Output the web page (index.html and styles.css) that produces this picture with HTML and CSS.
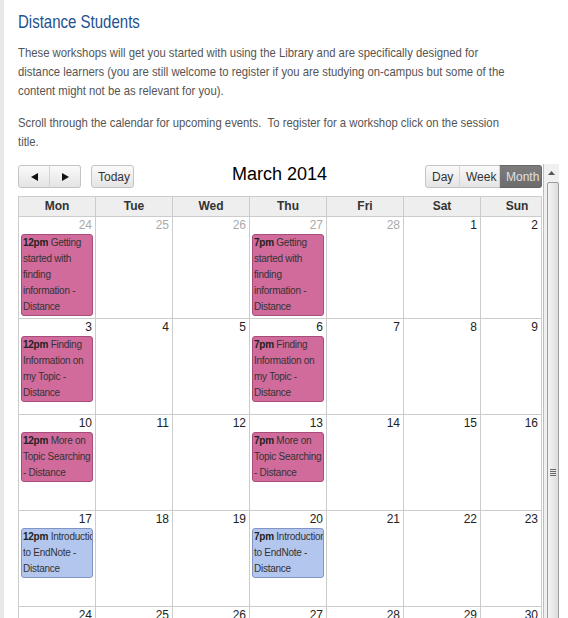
FILE: index.html
```html
<!DOCTYPE html>
<html lang="en">
<head>
  <meta charset="UTF-8" />
  <title>Distance Students</title>
  <link rel="stylesheet" href="styles.css">
</head>
<body>
  <div class="page">
    <h1 class="title">Distance Students</h1>
    <p class="intro">These workshops will get you started with using the Library and are specifically designed for distance learners (you are still welcome to register if you are studying on-campus but some of the content might not be as relevant for you).</p>
    <p class="intro">Scroll through the calendar for upcoming events. &nbsp;To register for a workshop click on the session title.</p>

    <div class="calendar-frame">
      <div class="calendar">
        <div class="toolbar">
          <div class="tb-left">
            <div class="btn-group">
              <button class="btn btn-arrow"><svg width="7" height="8" viewBox="0 0 7 8"><path d="M0 4 L7 0 L7 8 Z" fill="#111"/></svg></button>
              <button class="btn btn-arrow"><svg width="7" height="8" viewBox="0 0 7 8"><path d="M7 4 L0 0 L0 8 Z" fill="#111"/></svg></button>
            </div>
            <button class="btn btn-today">Today</button>
          </div>
          <div class="tb-title">March 2014</div>
          <div class="btn-group">
            <button class="btn btn-day">Day</button>
            <button class="btn btn-week">Week</button>
            <button class="btn btn-month active">Month</button>
          </div>
        </div>

        <div class="month">
          <div class="week head">
            <div class="dow">Mon</div><div class="dow">Tue</div><div class="dow">Wed</div><div class="dow">Thu</div><div class="dow">Fri</div><div class="dow">Sat</div><div class="dow dow-sun">Sun</div>
          </div>

          <div class="week">
            <div class="day other"><div class="num">24</div>
              <div class="event pink"><b>12pm</b> Getting started with finding information - Distance</div>
            </div>
            <div class="day other"><div class="num">25</div></div>
            <div class="day other"><div class="num">26</div></div>
            <div class="day other"><div class="num">27</div>
              <div class="event pink"><b>7pm</b> Getting started with finding information - Distance</div>
            </div>
            <div class="day other"><div class="num">28</div></div>
            <div class="day"><div class="num">1</div></div>
            <div class="day"><div class="num">2</div></div>
          </div>

          <div class="week">
            <div class="day"><div class="num">3</div>
              <div class="event pink"><b>12pm</b> Finding Information on my Topic - Distance</div>
            </div>
            <div class="day"><div class="num">4</div></div>
            <div class="day"><div class="num">5</div></div>
            <div class="day"><div class="num">6</div>
              <div class="event pink"><b>7pm</b> Finding Information on my Topic - Distance</div>
            </div>
            <div class="day"><div class="num">7</div></div>
            <div class="day"><div class="num">8</div></div>
            <div class="day"><div class="num">9</div></div>
          </div>

          <div class="week">
            <div class="day"><div class="num">10</div>
              <div class="event pink"><b>12pm</b> More on Topic Searching - Distance</div>
            </div>
            <div class="day"><div class="num">11</div></div>
            <div class="day"><div class="num">12</div></div>
            <div class="day"><div class="num">13</div>
              <div class="event pink"><b>7pm</b> More on Topic Searching - Distance</div>
            </div>
            <div class="day"><div class="num">14</div></div>
            <div class="day"><div class="num">15</div></div>
            <div class="day"><div class="num">16</div></div>
          </div>

          <div class="week">
            <div class="day"><div class="num">17</div>
              <div class="event blue"><span class="first-line"><b>12pm</b> Introduction</span> to EndNote - Distance</div>
            </div>
            <div class="day"><div class="num">18</div></div>
            <div class="day"><div class="num">19</div></div>
            <div class="day"><div class="num">20</div>
              <div class="event blue"><span class="first-line"><b>7pm</b> Introduction</span> to EndNote - Distance</div>
            </div>
            <div class="day"><div class="num">21</div></div>
            <div class="day"><div class="num">22</div></div>
            <div class="day"><div class="num">23</div></div>
          </div>

          <div class="week">
            <div class="day"><div class="num">24</div></div>
            <div class="day"><div class="num">25</div></div>
            <div class="day"><div class="num">26</div></div>
            <div class="day"><div class="num">27</div></div>
            <div class="day"><div class="num">28</div></div>
            <div class="day"><div class="num">29</div></div>
            <div class="day"><div class="num">30</div></div>
          </div>
        </div>
      </div>

      <div class="scrollbar">
        <div class="sb-arrow"><svg width="7" height="4" viewBox="0 0 7 4"><path d="M0 4 L3.5 0 L7 4 Z" fill="#555"/></svg></div>
        <div class="sb-thumb">
          <div class="sb-grip"></div>
        </div>
      </div>
    </div>
  </div>
</body>
</html>
```

FILE: styles.css
```css
body {
  margin: 0;
  height: 618px;
  overflow: hidden;
  background: #fff;
  border-left: 4px solid #e8e8e8;
  font-family: "Liberation Sans", Arial, sans-serif;
}

.page {
  padding-left: 14px;
}

/* the original uses a condensed face, so squeeze the regular one */
.title {
  display: inline-block;
  margin: 10px 0 0;
  font-size: 19px;
  line-height: 24px;
  font-weight: normal;
  color: #23518f;
  transform: scaleX(0.79);
  transform-origin: left center;
}

.intro {
  width: 568px;
  margin: 9px 0 0;
  font-size: 13px;
  line-height: 19px;
  color: #555;
  transform: scaleX(0.87);
  transform-origin: left top;
}

.intro + .intro {
  margin-top: 13px;
}

/* calendar */

.calendar-frame {
  display: flex;
  margin-top: 13px;
}

.calendar {
  width: 524px;
}

.toolbar {
  display: flex;
  align-items: center;
  height: 23px;
  margin-top: 1px;
}

.tb-left {
  display: flex;
  align-items: center;
  gap: 10px;
}

.tb-title {
  flex: 1;
  text-align: center;
  font-size: 18px;
  color: #000;
  margin-top: -4px;
}

.btn-group {
  display: flex;
}

.btn {
  height: 23px;
  padding: 0 6px;
  border: 1px solid #c4c4c4;
  background: linear-gradient(#fafafa, #e4e4e4);
  font-family: "Liberation Sans", Arial, sans-serif;
  font-size: 12px;
  color: #333;
  border-radius: 0;
}

.btn-group .btn + .btn {
  border-left: 1px solid #d4d4d4;
  margin-left: -1px;
}

.btn-group .btn:first-child {
  border-radius: 3px 0 0 3px;
}

.btn-group .btn:last-child {
  border-radius: 0 3px 3px 0;
}

.btn-arrow {
  width: 32px;
  display: flex;
  align-items: center;
  justify-content: center;
}

.btn-today {
  width: 43px;
  border-radius: 3px;
}

.btn-day { width: 35px; }
.btn-week { width: 41px; }
.btn-month { width: 43px; }

.btn.active {
  background: linear-gradient(#7c7c7c, #6c6c6c);
  border-color: #666;
  color: #e0e0e0;
}

.month {
  margin-top: 8px;
  border-top: 1px solid #ccc;
}

.week {
  display: grid;
  grid-template-columns: 78px repeat(5, 77px) 61px;
  min-height: 96px;
}

.week.head {
  min-height: 0;
}

.dow {
  height: 19px;
  line-height: 19px;
  text-align: center;
  font-size: 12px;
  font-weight: bold;
  color: #333;
  background: #eee;
  border-right: 1px solid #ccc;
  border-bottom: 1px solid #ccc;
}

.dow:first-child,
.day:first-child {
  border-left: 1px solid #ccc;
}

.dow-sun {
  padding-left: 12px;
}

.day {
  border-right: 1px solid #ccc;
  border-bottom: 1px solid #ccc;
  padding-bottom: 2px;
}

.num {
  height: 17px;
  padding: 1px 3px 0 0;
  box-sizing: border-box;
  text-align: right;
  font-size: 12px;
  line-height: 15px;
  color: #222;
}

.other .num {
  color: #aaa;
}

.event {
  margin: 0 2px;
  padding: 0 0 0 1px;
  border: 1px solid;
  border-radius: 3px;
  font-size: 10px;
  letter-spacing: -0.25px;
  line-height: 16px;
  color: #333;
  overflow: hidden;
}

.event b {
  color: #222;
}

.event.pink {
  background: #d06b9c;
  border-color: #a84c7c;
}

.event.blue {
  background: #b3c6ee;
  border-color: #8095c4;
}

.first-line {
  display: block;
  white-space: nowrap;
}

/* fake scrollbar */

.scrollbar {
  width: 15px;
  margin-left: 1px;
  border-left: 1px solid #bdbdbd;
  background: #f0f0f0;
  display: flex;
  flex-direction: column;
  align-items: center;
}

.sb-arrow {
  height: 18px;
  display: flex;
  align-items: center;
  justify-content: center;
}

.sb-thumb {
  flex: 1;
  width: 10px;
  margin-left: 2px;
  border: 1px solid #9c9c9c;
  border-radius: 2px;
  background: linear-gradient(90deg, #f4f4f4, #dcdcdc);
  position: relative;
}

.sb-grip {
  position: absolute;
  top: 286px;
  left: 2px;
  width: 6px;
  height: 8px;
  background: repeating-linear-gradient(#666 0 1px, transparent 1px 2px);
}
```
